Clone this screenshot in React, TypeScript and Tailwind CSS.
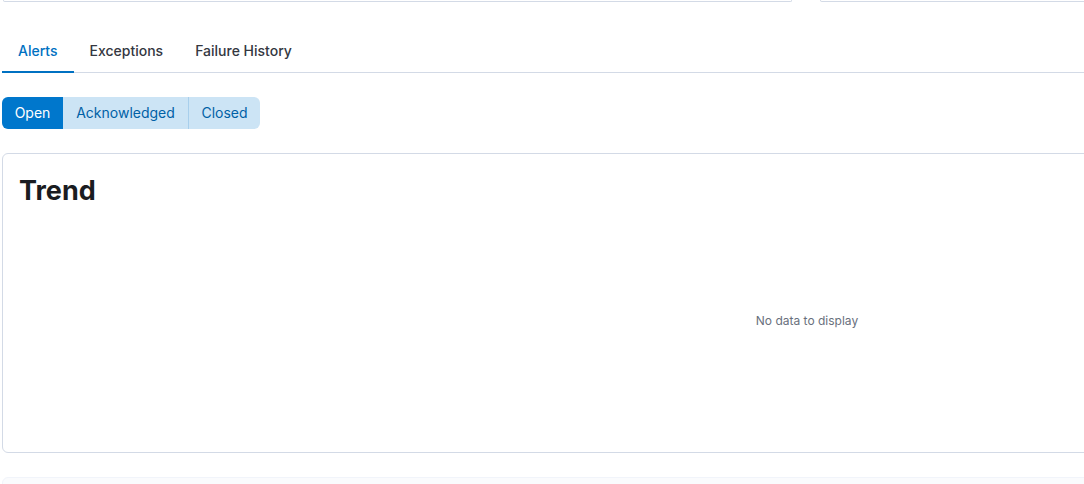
const tabs = ['Alerts', 'Exceptions', 'Failure History']
const states = [
  { label: 'Open', w: 'w-[61px]' },
  { label: 'Acknowledged', w: 'w-[125px]' },
  { label: 'Closed', w: 'w-[72px]' },
]

export default function App() {
  return (
    <div className="w-[1084px] h-[484px] overflow-hidden bg-white" style={{ fontFamily: 'Inter, "Liberation Sans", sans-serif' }}>
      <div className="w-[1612px] pl-[2px]">
        <div className="flex gap-[28px] pl-[1px]">
          <div className="w-[789px] h-[2px] border-b border-x border-[#d3dae6] rounded-b-[3px]" />
          <div className="w-[789px] h-[2px] border-b border-x border-[#d3dae6] rounded-b-[3px]" />
        </div>

        <div className="mt-[31px] flex border-b border-[#d3dae6] h-[40px]">
          {tabs.map((t, i) => (
            <button
              key={t}
              className={`px-4 pb-[4px] text-[14px] font-medium relative ${i === 0 ? 'text-[#0071c2]' : 'text-[#343741]'}`}
            >
              {t}
              {i === 0 && <span className="absolute left-0 right-0 bottom-[-1px] h-[2px] bg-[#0071c2]" />}
            </button>
          ))}
        </div>

        <div className="mt-[24px] flex h-[32px] w-max rounded-[6px] overflow-hidden text-[14px]">
          {states.map((s, i) => (
            <button
              key={s.label}
              className={`${s.w} pb-[1px] ${i === 0 ? 'bg-[#0077cc] text-white' : 'bg-[#cce4f5] text-[#0061a6]'} ${i === 2 ? 'border-l border-[#a8cfec]' : ''}`}
            >
              {s.label}
            </button>
          ))}
        </div>

        <div className="mt-[24px] h-[300px] border border-[#d3dae6] rounded-[6px] p-4 flex flex-col">
          <h2 className="text-[27px] font-bold text-[#1a1c21] leading-[32px] mt-[5px]">Trend</h2>
          <div className="flex-1 flex items-center justify-center text-[12px] text-[#69707d] pb-[2px]">
            No data to display
          </div>
        </div>

        <div className="mt-[24px] h-[40px] border border-[#f1f4fa] bg-[#fafbfd] rounded-[6px]" />
      </div>
    </div>
  )
}
